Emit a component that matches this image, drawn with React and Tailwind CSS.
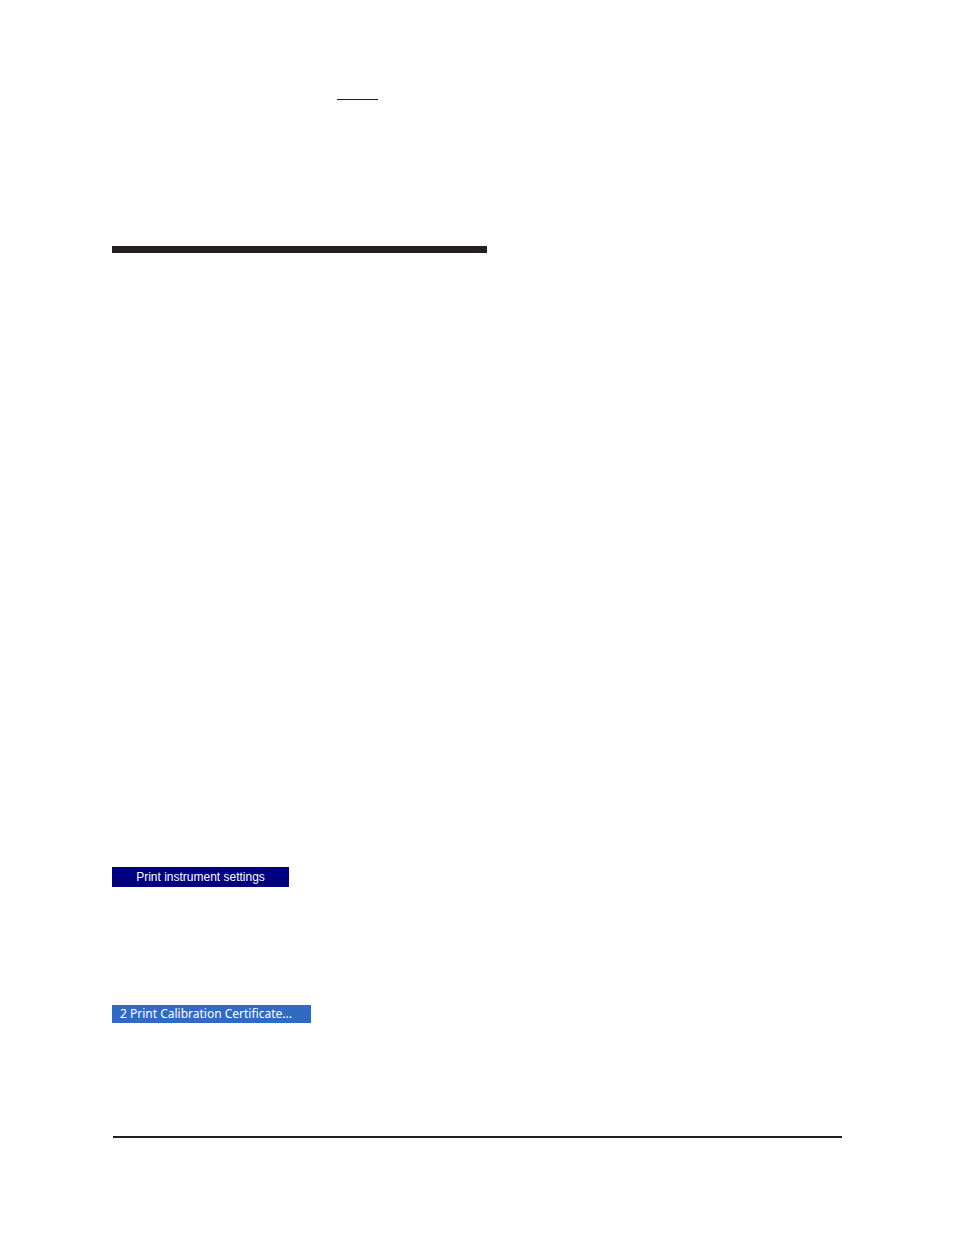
export default function App() {
  return (
    <main className="min-h-screen bg-white px-28 pt-[99px] pb-24 text-white">
      <hr className="ml-[225px] h-px w-[41px] border-0 bg-[#231f20]" />
      <hr className="mt-[146px] h-[7px] w-[375px] border-0 bg-[#231f20]" />
      <button
        type="button"
        className="mt-[614px] block h-5 w-[177px] bg-[#000080] text-center font-['Liberation_Sans',sans-serif] text-xs leading-5 whitespace-nowrap"
      >
        Print instrument settings
      </button>
      <button
        type="button"
        className="mt-[118px] block h-[18px] w-[199px] bg-[#316ac5] pl-2 text-left font-['Noto_Sans',sans-serif] text-xs leading-[18px] whitespace-nowrap"
      >
        2 Print Calibration Certificate...
      </button>
      <hr className="mt-[113px] ml-px h-[2px] border-0 bg-[#231f20]" />
    </main>
  );
}
